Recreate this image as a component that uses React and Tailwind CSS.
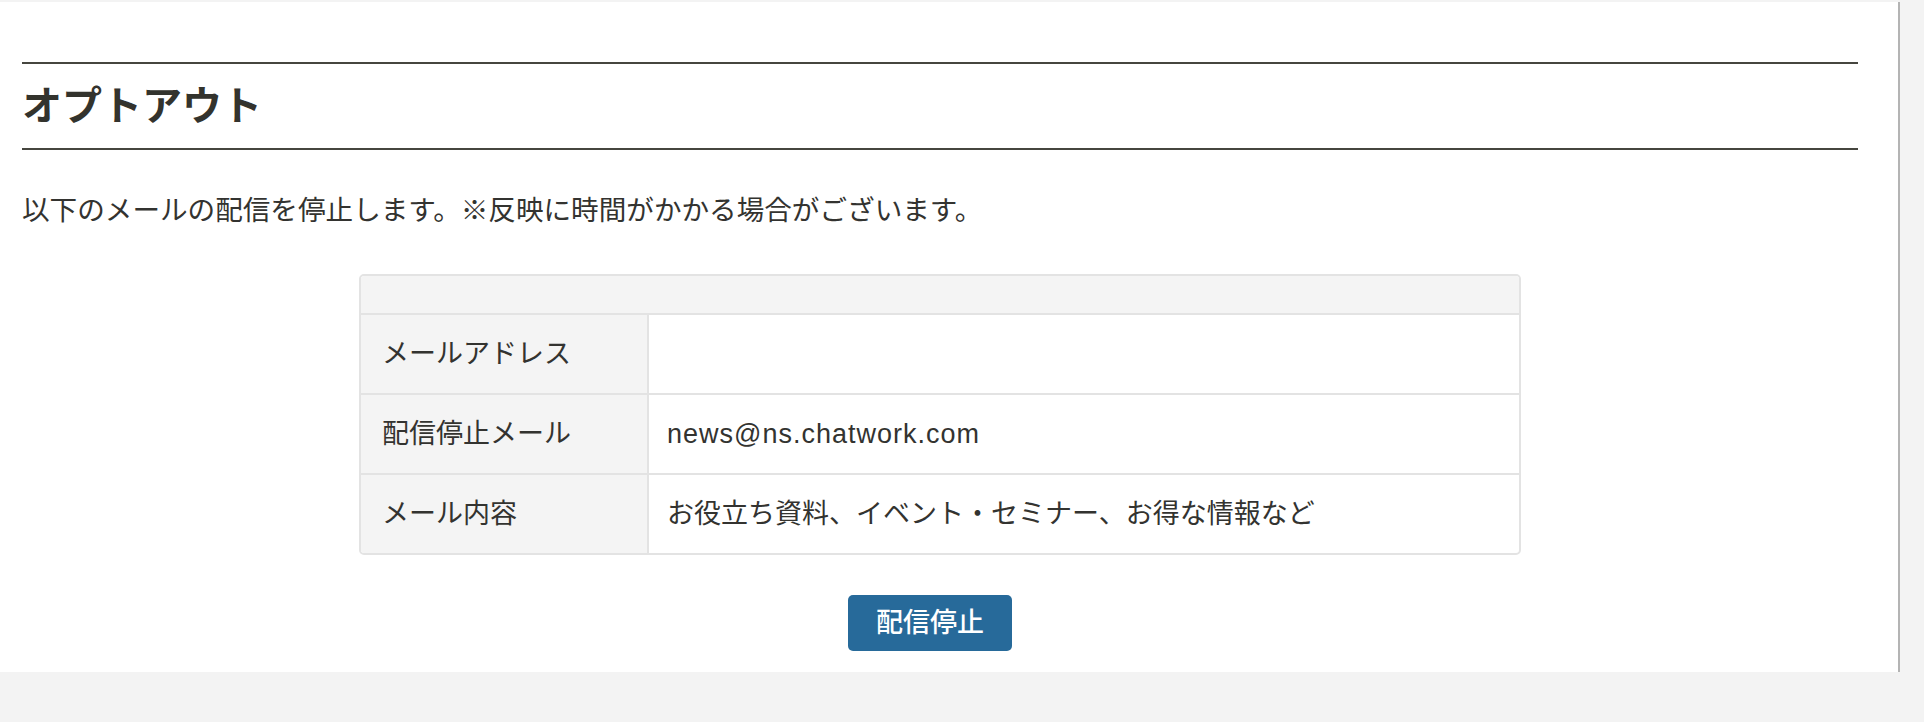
const rows = [
  { label: 'メールアドレス', value: '' },
  { label: '配信停止メール', value: 'news@ns.chatwork.com', latin: true },
  { label: 'メール内容', value: 'お役立ち資料、イベント・セミナー、お得な情報など' },
]

export default function App() {
  return (
    <div className="w-[1924px] h-[722px] bg-[#f3f3f3] pt-[2px] text-[#333330] font-['Liberation_Sans','Noto_Sans_CJK_JP',sans-serif]">
      <div className="flex h-[670px]">
        {/* Main panel */}
        <main className="w-[1898px] bg-white pt-[60px] pl-[22px] pr-[40px] pb-[20px]">
          <h1 className="border-y-2 border-[#46463f] pt-[18px] pb-[18px] text-[40px] leading-[48px] font-bold text-[#33332d]">
            オプトアウト
          </h1>

          <p className="mt-[41px] text-[27.6px] leading-[40px]">
            以下のメールの配信を停止します。※反映に時間がかかる場合がございます。
          </p>

          {/* Info table */}
          <div className="mx-auto mt-[43px] w-[1162px] border-2 border-[#e3e3e3] rounded-[5px] overflow-hidden">
            <div className="h-[39px] bg-[#f4f4f4] border-b-2 border-[#e3e3e3]" />
            {rows.map((row, i) => {
              const last = i === rows.length - 1
              return (
                <div
                  key={row.label}
                  className={
                    'grid grid-cols-[288px_1fr] text-[27px] ' +
                    (last ? 'h-[78px]' : 'h-[80px] border-b-2 border-[#e3e3e3]')
                  }
                >
                  <div className="flex items-center bg-[#f4f4f4] border-r-2 border-[#e3e3e3] pl-[21px]">
                    {row.label}
                  </div>
                  <div className="flex items-center pl-[18px]">
                    <span className={row.latin ? 'tracking-[1px]' : ''}>{row.value}</span>
                  </div>
                </div>
              )
            })}
          </div>

          <div className="flex justify-center pr-[20px] mt-[40px]">
            <button className="w-[164px] h-[56px] rounded-[5px] bg-[#276a9a] text-white text-[27px] font-medium">
              配信停止
            </button>
          </div>
        </main>
        {/* Right edge */}
        <div className="w-[2px] bg-[#b4b4b4]" />
      </div>
    </div>
  )
}
